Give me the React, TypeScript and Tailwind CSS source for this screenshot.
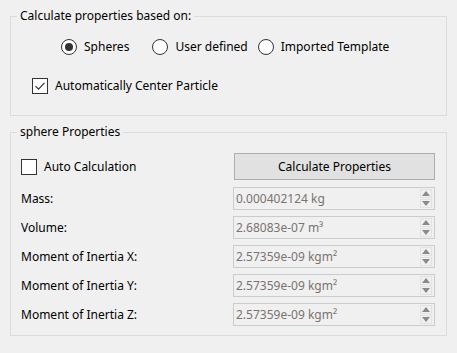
import React from "react";

const font = { fontFamily: '"Noto Sans", "Liberation Sans", sans-serif' };

function Radio({ checked, label }: { checked?: boolean; label: string }) {
  return (
    <div className="flex items-center gap-[7px]">
      <div className="w-[16px] h-[16px] rounded-full border border-[#333333] bg-white flex items-center justify-center">
        {checked && <div className="w-[8px] h-[8px] rounded-full bg-[#333333]" />}
      </div>
      <span>{label}</span>
    </div>
  );
}

function Check({ checked, label }: { checked?: boolean; label: string }) {
  return (
    <div className="flex items-center gap-[7px]">
      <div className="w-[16px] h-[16px] border border-[#333333] bg-white flex items-center justify-center">
        {checked && (
          <svg width="12" height="12" viewBox="0 0 12 12">
            <path d="M1.5 6.2 L4.5 9.2 L10.5 2.8" fill="none" stroke="#333333" strokeWidth="1.2" />
          </svg>
        )}
      </div>
      <span>{label}</span>
    </div>
  );
}

function Spin({ value }: { value: string }) {
  return (
    <div className="w-[202px] h-[23px] border border-[#cccccc] flex items-center pl-[2px] pr-[2px]">
      <span className="flex-1 text-[#7a7370]">{value}</span>
      <div className="flex flex-col gap-[1px] w-[12px]">
        <div className="h-[9px] border border-[#e2e2e2] flex items-center justify-center">
          <svg width="8" height="5" viewBox="0 0 8 5">
            <path d="M0 5 L4 0 L8 5 Z" fill="#8a8a8a" />
          </svg>
        </div>
        <div className="h-[9px] border border-[#e2e2e2] flex items-center justify-center">
          <svg width="8" height="5" viewBox="0 0 8 5">
            <path d="M0 0 L4 5 L8 0 Z" fill="#8a8a8a" />
          </svg>
        </div>
      </div>
    </div>
  );
}

function Row({ label, value }: { label: string; value: string }) {
  return (
    <div className="flex items-center justify-between h-[23px]">
      <span>{label}</span>
      <Spin value={value} />
    </div>
  );
}

export default function App() {
  return (
    <div className="w-[457px] h-[353px] bg-[#f0f0f0] text-[12px] text-black pt-[16px] pl-[10px]" style={font}>
      <div className="relative w-[437px] h-[100px] border border-[#dcdcdc]">
        <span className="absolute left-[6px] -top-[9px] px-[3px] bg-[#f0f0f0] leading-[16px]">
          Calculate properties based on:
        </span>
        <div className="flex pl-[50px] pt-[21px]">
          <Radio checked label="Spheres" />
          <div className="ml-[23px]">
            <Radio label="User defined" />
          </div>
          <div className="ml-[10px]">
            <Radio label="Imported Template" />
          </div>
        </div>
        <div className="pl-[21px] pt-[21px]">
          <Check checked label="Automatically Center Particle" />
        </div>
      </div>
      <div className="relative w-[437px] h-[204px] border border-[#dcdcdc] mt-[16px]">
        <span className="absolute left-[6px] -top-[9px] px-[3px] bg-[#f0f0f0] leading-[16px]">
          sphere Properties
        </span>
        <div className="pl-[10px] pr-[11px] pt-[20px] flex flex-col">
          <div className="flex items-center justify-between h-[27px]">
            <Check label="Auto Calculation" />
            <div className="w-[201px] h-[27px] bg-[#e1e1e1] border border-[#adadad] flex items-center justify-center">
              Calculate Properties
            </div>
          </div>
          <div className="flex flex-col gap-[6px] mt-[7px]">
            <Row label="Mass:" value="0.000402124 kg" />
            <Row label="Volume:" value="2.68083e-07 m³" />
            <Row label="Moment of Inertia X:" value="2.57359e-09 kgm²" />
            <Row label="Moment of Inertia Y:" value="2.57359e-09 kgm²" />
            <Row label="Moment of Inertia Z:" value="2.57359e-09 kgm²" />
          </div>
        </div>
      </div>
    </div>
  );
}
